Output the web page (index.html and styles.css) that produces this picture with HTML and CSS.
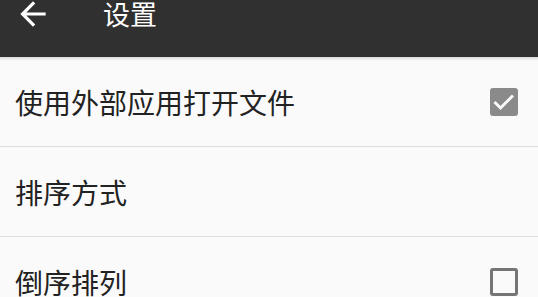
FILE: index.html
```html
<!DOCTYPE html>
<html lang="zh-CN">
<head>
    <meta charset="UTF-8">
    <meta name="viewport" content="width=device-width, initial-scale=1.0">
    <title>设置</title>
    <link rel="stylesheet" href="styles.css">
</head>
<body>

<div class="toolbar">
    <svg class="back-icon" viewBox="0 0 24 24" width="38" height="38">
        <path fill="#fff" d="M20 11H7.83l5.59-5.59L12 4l-8 8 8 8 1.41-1.41L7.83 13H20v-2z"/>
    </svg>
    <span class="toolbar-title">设置</span>
</div>

<div class="settings-list">
    <div class="setting-row">
        <span class="setting-label">使用外部应用打开文件</span>
        <span class="checkbox checked">
            <svg viewBox="0 0 28 28" width="28" height="28">
                <polyline points="4.5,14 10.5,20 23,7.5" fill="none" stroke="#fafafa" stroke-width="3"/>
            </svg>
        </span>
    </div>
    <div class="setting-row">
        <span class="setting-label">排序方式</span>
    </div>
    <div class="setting-row">
        <span class="setting-label">倒序排列</span>
        <span class="checkbox"></span>
    </div>
</div>

</body>
</html>
```

FILE: styles.css
```css
body {
    margin: 0;
    background-color: #fafafa;
    font-family: 'Noto Sans CJK SC', 'Noto Sans', sans-serif;
    color: #212121;
    overflow: hidden;
}

.toolbar {
    height: 57px;
    box-sizing: border-box;
    padding: 0 0 30px 14px;
    background-color: #303030;
    display: flex;
    align-items: center;
    position: relative;
}

.toolbar::after {
    content: '';
    position: absolute;
    left: 0;
    right: 0;
    top: 57px;
    height: 4px;
    background: linear-gradient(rgba(0, 0, 0, 0.12), rgba(0, 0, 0, 0));
}

.back-icon {
    display: block;
}

.toolbar-title {
    margin-left: 51px;
    color: #fff;
    font-size: 27px;
    line-height: 27px;
}

.setting-row {
    height: 89px;
    border-bottom: 1px solid #dedede;
    display: flex;
    align-items: center;
    justify-content: space-between;
    padding: 0 20px 0 15px;
}

.setting-label {
    font-size: 28px;
    color: #222;
}

.checkbox {
    width: 22px;
    height: 22px;
    border: 3px solid #757575;
    border-radius: 3px;
}

.checkbox.checked {
    width: 28px;
    height: 28px;
    border: none;
    background-color: #8a8a8a;
}

.checkbox svg {
    display: block;
}
```
